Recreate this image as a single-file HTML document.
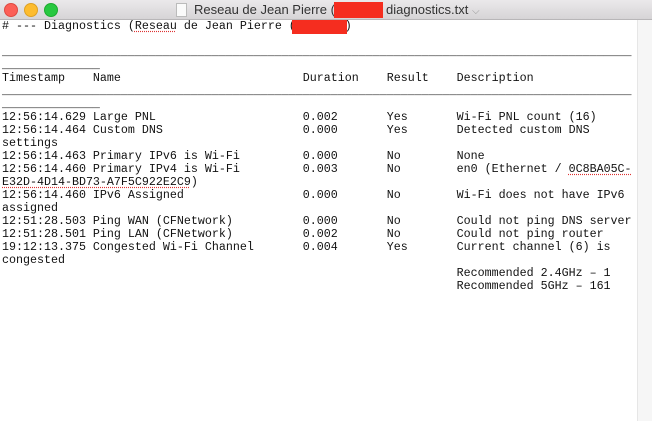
<!DOCTYPE html>
<html><head><meta charset="utf-8"><style>
html,body{margin:0;padding:0;width:652px;height:421px;overflow:hidden;background:#fff}
.tb{position:absolute;left:0;top:0;width:652px;height:19px;background:linear-gradient(#ebe9eb,#d6d4d6);border-bottom:1px solid #b8b6b8}
.l{position:absolute;top:3px;width:12px;height:12px;border-radius:50%}
.tt{position:absolute;top:2px;font:13px "Liberation Sans",sans-serif;color:#333;white-space:nowrap}
.sb{position:absolute;left:637px;top:20px;width:15px;height:401px;background:#f6f6f6;border-left:1px solid #e6e6e6}
pre{position:absolute;left:2px;top:20px;margin:0;font:11.67px/13px "Liberation Mono",monospace;color:#111}
.red{position:absolute;background:#f52d1f}
.sq{text-decoration:underline dotted #d33;text-underline-offset:2px}
</style></head><body>
<div class="tb"></div>
<div class="l" style="left:4px;background:#fc5f57;border:0.5px solid #de4a42"></div>
<div class="l" style="left:24px;background:#fdbc2e;border:0.5px solid #dea123"></div>
<div class="l" style="left:44px;background:#28c840;border:0.5px solid #1eab2f"></div>
<span style="position:absolute;left:176px;top:3px;width:9px;height:12px;background:#fafafa;border:1px solid #bbb"></span>
<div class="tt" style="left:194px">Reseau de Jean Pierre (</div>
<div class="red" style="left:334px;top:2px;width:49px;height:16px"></div>
<div class="tt" style="left:386px">diagnostics.txt <span style="color:#999;font-size:10px">⌵</span></div>
<div class="sb"></div>
<pre># --- Diagnostics (<span class="sq">Reseau</span> de Jean Pierre (       )

__________________________________________________________________________________________
______________
Timestamp    Name                          Duration    Result    Description
__________________________________________________________________________________________
______________
12:56:14.629 Large PNL                     0.002       Yes       Wi-Fi PNL count (16)
12:56:14.464 Custom DNS                    0.000       Yes       Detected custom DNS
settings
12:56:14.463 Primary IPv6 is Wi-Fi         0.000       No        None
12:56:14.460 Primary IPv4 is Wi-Fi         0.003       No        en0 (Ethernet / <span class="sq">0C8BA05C-</span>
<span class="sq">E32D-4D14-BD73-A7F5C922E2C9</span>)
12:56:14.460 IPv6 Assigned                 0.000       No        Wi-Fi does not have IPv6
assigned
12:51:28.503 Ping WAN (CFNetwork)          0.000       No        Could not ping DNS server
12:51:28.501 Ping LAN (CFNetwork)          0.002       No        Could not ping router
19:12:13.375 Congested Wi-Fi Channel       0.004       Yes       Current channel (6) is
congested
                                                                 Recommended 2.4GHz – 1
                                                                 Recommended 5GHz – 161</pre>
<div class="red" style="left:292px;top:20px;width:55px;height:14px"></div>
</body></html>
